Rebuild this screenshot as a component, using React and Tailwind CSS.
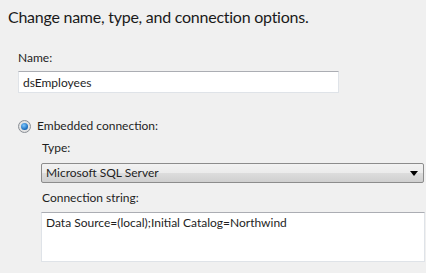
export default function App() {
  return (
    <div className="w-[426px] h-[273px] bg-[#f0f0f0] overflow-hidden text-[12px] text-[#1e1e1e]"
      style={{ fontFamily: 'Lato, "Noto Sans", sans-serif' }}>
      <div className="pl-2 pt-[6px] h-[48px] text-[16px] leading-[22px] tracking-[-0.25px] text-[#1a1a1a]">
        Change name, type, and connection options.
      </div>

      <div className="ml-[18px] w-[321px]">
        <div className="h-[23px] leading-[18px] pt-[1px]">Name:</div>
        <input
          defaultValue="dsEmployees"
          className="block w-full h-[22px] px-[4px] bg-white border border-[#dfe3e8] border-t-[#abadb3] outline-none text-[12px]"
        />
      </div>

      <div className="ml-[18px] mt-[25px] flex items-center gap-[6px] h-[16px]">
        <div className="w-[13px] h-[13px] rounded-full border border-[#8a8f96] bg-[radial-gradient(circle,#f2f2f2,#d8d8d8)] flex items-center justify-center">
          <div className="w-[7px] h-[7px] rounded-full bg-[radial-gradient(circle_at_40%_35%,#7fc8ff,#1467b8_70%,#0d3f7a)]" />
        </div>
        <span>Embedded connection:</span>
      </div>

      <div className="ml-[41px] mr-[2px] mt-[3px]">
        <div className="h-[26px] leading-[22px] pl-[1px]">Type:</div>
        <div className="relative h-[20px] rounded-[2px] border border-[#8c8c8c] bg-[linear-gradient(#f2f2f2,#ebebeb_50%,#dddddd_50%,#cfcfcf)] flex items-center pl-[4px]">
          <span>Microsoft SQL Server</span>
          <svg className="absolute right-[5px] top-[7px]" width="8" height="5" viewBox="0 0 8 5">
            <path d="M0 0H8L4 5Z" fill="#000" />
          </svg>
        </div>
        <div className="h-[29px] leading-[22px] pt-[4px] pl-[1px]">Connection string:</div>
        <div className="h-[50px] mr-[-1px] bg-white border border-[#dfe3e8] border-t-[#abadb3] px-[4px] pt-[1px] leading-[18px]">
          Data Source=(local);Initial Catalog=Northwind
        </div>
      </div>
    </div>
  )
}
